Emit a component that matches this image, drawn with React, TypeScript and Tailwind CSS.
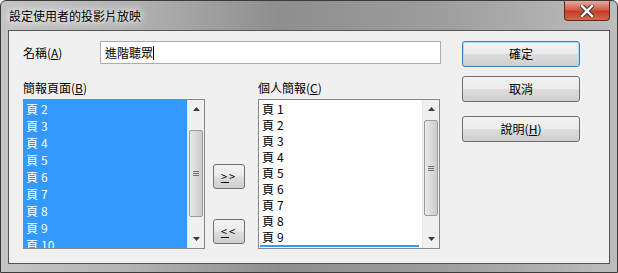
const font = "font-['Microsoft_JhengHei','Noto_Sans_CJK_TC',sans-serif]"

const leftPages = ["2", "3", "4", "5", "6", "7", "8", "9", "10"]
const rightPages = ["1", "2", "3", "4", "5", "6", "7", "8", "9"]

function Scrollbar({ thumbTop, thumbHeight }: { thumbTop: number; thumbHeight: number }) {
  return (
    <div className="relative w-[17px] h-full bg-[#f0f0f0] border-l border-[#e6e6e6]">
      <svg className="absolute left-[5px] top-[7px]" width="7" height="4" viewBox="0 0 7 4">
        <path d="M0 4 L3.5 0 L7 4 Z" fill="#3c3c3c" />
      </svg>
      <div
        className="absolute left-[1px] w-[14px] rounded-[2px] border border-[#9b9b9b] bg-gradient-to-r from-[#eaeaea] via-[#dadada] to-[#cbcbcb] flex items-center justify-center"
        style={{ top: thumbTop, height: thumbHeight }}
      >
        <div className="flex flex-col gap-[1px]">
          <div className="w-[6px] h-[1px] bg-[#707070]" />
          <div className="w-[6px] h-[1px] bg-[#707070]" />
          <div className="w-[6px] h-[1px] bg-[#707070]" />
        </div>
      </div>
      <svg className="absolute left-[5px] bottom-[7px]" width="7" height="4" viewBox="0 0 7 4">
        <path d="M0 0 L3.5 4 L7 0 Z" fill="#3c3c3c" />
      </svg>
    </div>
  )
}

function Button({ children, focused }: { children: React.ReactNode; focused?: boolean }) {
  return (
    <div
      className={`w-[118px] h-[26px] rounded-[3px] border ${
        focused ? "border-[#3c7fb1] shadow-[inset_0_0_0_1px_#a6dcf5]" : "border-[#707070]"
      } bg-[linear-gradient(#f2f2f2_0%,#ebebeb_48%,#dddddd_52%,#cfcfcf_100%)] flex items-center justify-center text-[12px] text-black`}
    >
      {children}
    </div>
  )
}

function SmallButton({ children }: { children: React.ReactNode }) {
  return (
    <div className="w-[32px] h-[25px] rounded-[3px] border border-[#707070] bg-[linear-gradient(#f2f2f2_0%,#ebebeb_48%,#dddddd_52%,#cfcfcf_100%)] flex items-center justify-center text-[11px] tracking-[2px] text-black">
      {children}
    </div>
  )
}

export default function App() {
  return (
    <div className={`w-[618px] h-[273px] ${font} relative overflow-hidden`}>
      <div className="w-full h-full rounded-t-[6px] border border-[#3b3b3b] bg-[linear-gradient(90deg,#c4c4c4_0%,#b4b4b4_20%,#8e8e8e_45%,#9c9c9c_70%,#bdbdbd_100%)] flex flex-col">
        {/* Title bar */}
        <div className="h-[29px] flex items-start">
          <div className="pl-[8px] pt-[6px] text-[12px] text-black [text-shadow:0_0_6px_#ffffff,0_0_10px_#ffffff]">
            設定使用者的投影片放映
          </div>
          <div className="ml-auto mr-[7px] w-[46px] h-[20px] rounded-b-[4px] border border-[#5a2a24] border-t-0 bg-[linear-gradient(#e8a89c_0%,#d45e4b_45%,#c23d26_55%,#d7664c_100%)] flex items-center justify-center">
            <svg width="14" height="12" viewBox="0 0 14 12">
              <path d="M2 1 L12 11 M12 1 L2 11" stroke="#3a3a3a" strokeWidth="4.5" strokeLinecap="square" />
              <path d="M2 1 L12 11 M12 1 L2 11" stroke="#ffffff" strokeWidth="2.4" strokeLinecap="square" />
            </svg>
          </div>
        </div>

        {/* Client area */}
        <div className="mx-[7px] h-[234px] border border-[#555555] bg-[#f0f0f0] flex pl-[14px] pt-[10px] text-[12px] text-black">
          <div className="w-[418px] flex flex-col">
            <div className="flex items-center h-[23px]">
              <div className="w-[77px]">
                名稱(<span className="underline">A</span>)
              </div>
              <div className="w-[341px] h-[23px] bg-white border border-[#abadb3] flex items-center pl-[4px]">
                進階聽眾<span className="w-[1px] h-[14px] bg-black" />
              </div>
            </div>
            <div className="flex mt-[12px] h-[23px] items-center">
              <div className="w-[235px]">
                簡報頁面(<span className="underline">B</span>)
              </div>
              <div>
                個人簡報(<span className="underline">C</span>)
              </div>
            </div>
            <div className="flex">
              <div className="w-[182px] h-[150px] border border-[#828790] bg-white flex">
                <div className="flex-1 bg-[#3399ff] overflow-hidden pl-[2px] text-white">
                  {leftPages.map((p) => (
                    <div key={p} className="h-[17px] leading-[17px] flex gap-[3px]">
                      <span>頁</span>
                      <span>{p}</span>
                    </div>
                  ))}
                </div>
                <Scrollbar thumbTop={30} thumbHeight={87} />
              </div>
              <div className="w-[53px] flex flex-col pl-[8px] pt-[65px] gap-[30px]">
                <SmallButton>
                  <span className="underline">&gt;</span>&gt;
                </SmallButton>
                <SmallButton>
                  <span className="underline">&lt;</span>&lt;
                </SmallButton>
              </div>
              <div className="w-[182px] h-[150px] border border-[#828790] bg-white flex">
                <div className="flex-1 overflow-hidden pl-[3px] pt-[1px] relative">
                  {rightPages.map((p) => (
                    <div key={p} className="h-[16px] leading-[16px] flex gap-[3px]">
                      <span>頁</span>
                      <span>{p}</span>
                    </div>
                  ))}
                  <div className="absolute left-[1px] right-[3px] top-[145px] h-[2px] bg-[#3399ff]" />
                </div>
                <Scrollbar thumbTop={20} thumbHeight={96} />
              </div>
            </div>
          </div>
          <div className="ml-[21px] flex flex-col">
            <Button focused>確定</Button>
            <div className="mt-[9px]">
              <Button>取消</Button>
            </div>
            <div className="mt-[14px]">
              <Button>
                說明(<span className="underline">H</span>)
              </Button>
            </div>
          </div>
        </div>
      </div>
    </div>
  )
}
